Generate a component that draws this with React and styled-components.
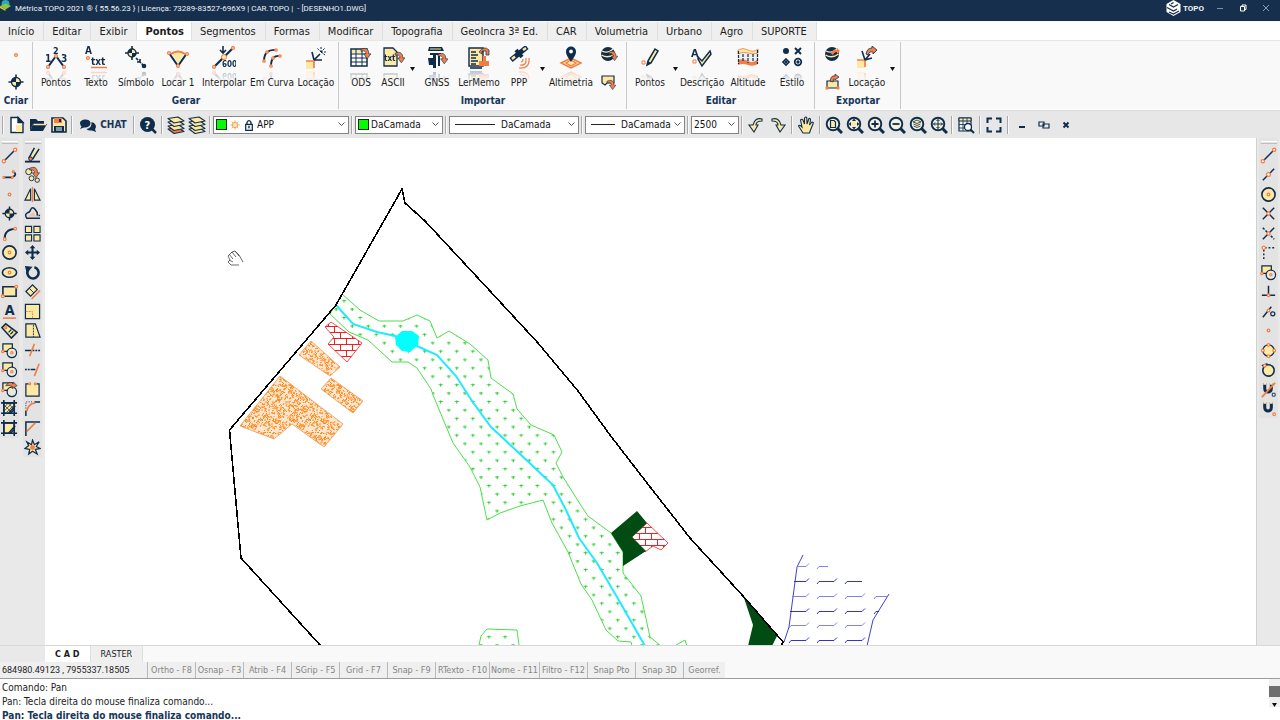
import React from 'react';
import styled, { createGlobalStyle } from 'styled-components';

const NAVY = '#0f2d4b';
const ORANGE = '#f27d45';
const CREAM = '#fde9a4';

const GlobalStyle = createGlobalStyle`
  * {
    box-sizing: border-box;
  }

  body {
    margin: 0;
    overflow: hidden;
    background: #f9f9f9;
    color: #1c1c1c;
    font-family: 'DejaVu Sans Condensed', 'Noto Sans', sans-serif;
    font-size: 10px;
  }

  button,
  input,
  select {
    margin: 0;
    padding: 0;
    border: 0;
    background: none;
    color: inherit;
    font: inherit;
  }

  svg {
    display: block;
    flex: none;
  }
`;

const Window = styled.div`
  display: flex;
  flex-direction: column;
  height: 100vh;
`;

const TitleBar = styled.header`
  display: flex;
  align-items: flex-start;
  height: 21px;
  padding-right: 3px;
  background: #162f4d;
  color: #eef2f6;
`;

const Title = styled.h1`
  flex: 1;
  margin: 0 0 0 3px;
  font-family: Roboto, sans-serif;
  font-size: 8px;
  font-weight: 400;
  line-height: 17px;
  white-space: pre;
`;

const Brand = styled.div`
  display: flex;
  align-items: center;
  gap: 2px;
  height: 16px;
  margin-right: 4px;
  font-family: Roboto, sans-serif;
  font-size: 8px;
  font-weight: 700;
`;

const CaptionButton = styled.button`
  display: flex;
  align-items: center;
  justify-content: center;
  width: 23px;
  height: 16px;
`;

const TabBar = styled.nav`
  display: flex;
  height: 19px;
  margin-top: 1px;
  background: #fff;
  border-bottom: 1px solid #e6e6e6;
`;

const Tab = styled.button`
  padding: 0 ${(p) => (p.$active ? 7 : 9)}px 0 8px;
  border-right: 1px solid #dedede;
  background: ${(p) => (p.$active ? '#fff' : '#efefef')};
  font-size: 11px;
  font-weight: ${(p) => (p.$active ? 700 : 400)};
  line-height: 17px;
  white-space: nowrap;
`;

const Ribbon = styled.div`
  display: flex;
  height: 69px;
  padding-top: 1px;
  border-bottom: 1px solid #fff;
`;

const Group = styled.section`
  display: flex;
  flex-direction: column;
  margin-right: 1px;
  padding: 4px ${(p) => p.$pad || 2}px 0;
  border-right: 1px solid #c9c9c9;
`;

const GroupBody = styled.div`
  display: flex;
  height: 45px;
`;

const GroupTitle = styled.h2`
  margin: 3px 0 0;
  color: #17365a;
  font-size: 10px;
  font-weight: 700;
  line-height: 14px;
  text-align: center;
`;

const RibbonButton = styled.button`
  display: flex;
  flex-direction: column;
  align-items: center;
  gap: 6px;
  width: ${(p) => p.$width}px;
  line-height: 14px;
  white-space: nowrap;
`;

const Mirrored = styled.span`
  -webkit-box-reflect: below 0 linear-gradient(transparent 50%, rgba(0, 0, 0, 0.35));
`;

const DropArrow = styled.button`
  width: 10px;
  display: flex;
  align-items: center;
  justify-content: center;
`;

const Stack = styled.div`
  display: flex;
  flex-direction: column;
  align-items: center;
  justify-content: space-between;
  width: 28px;
`;

const ToolBar = styled.div`
  display: flex;
  align-items: center;
  height: 28px;
  border-top: 1px solid #dcdcdc;
  background: #e7e7e7;
`;

const Divider = styled.span`
  width: 2px;
  height: 18px;
  margin: 0 2px;
  border-left: 1px solid #a9a9a9;
  border-right: 1px solid #fafafa;
`;

const ToolButton = styled.button`
  display: flex;
  align-items: center;
  justify-content: center;
  gap: 3px;
  width: ${(p) => p.$width || 21}px;
  height: 22px;
  color: #17365a;
  font-weight: 700;
`;

const Combo = styled.label`
  display: flex;
  align-items: center;
  gap: 2px;
  width: ${(p) => p.$width}px;
  height: 18px;
  padding: 0 3px 0 2px;
  border: 1px solid #858585;
  background: #fff;
`;

const Select = styled.select`
  flex: 1;
  min-width: 0;
  appearance: none;
  color: #111;
  outline: none;
`;

const Swatch = styled.span`
  width: 11px;
  height: 11px;
  border: 1px solid #222;
  background: #0f0;
`;

const LineSample = styled.span`
  width: ${(p) => p.$width}px;
  height: 1px;
  margin: 0 4px 0 3px;
  background: #222;
`;

const Main = styled.main`
  display: flex;
  flex: 1;
  min-height: 0;
  background: #e9e9e9;
`;

const SideBar = styled.aside`
  display: flex;
  align-items: flex-start;
  gap: 4px;
  padding: ${(p) => (p.$right ? '0 2px' : '0 3px 0 0')};
  border-left: ${(p) => (p.$right ? '1px solid #d0d0d0' : 0)};
`;

const PaletteColumn = styled.div`
  display: flex;
  flex-direction: column;
  width: 19px;
  background: #e3e3e3;
`;

const PaletteGrip = styled.span`
  width: 16px;
  height: 3px;
  margin: 3px auto 1px;
  border-top: 1px solid #fff;
  border-bottom: 1px solid #bdbdbd;
`;

const PaletteGrid = styled.div`
  display: grid;
  grid-auto-rows: 20px 19px;
`;

const PaletteButton = styled.button`
  display: flex;
  align-items: center;
  justify-content: center;
`;

const Canvas = styled.div`
  flex: 1;
  min-width: 0;
  overflow: hidden;
  background: #fff;
`;

const SheetBar = styled.div`
  display: flex;
  height: 17px;
  padding-left: 45px;
  border-top: 1px solid #d8d8d8;
  background: linear-gradient(to right, #e9e9e9 45px, #f9f9f9 45px);
`;

const SheetTab = styled.button`
  padding: 0 10px;
  border-right: 1px solid #dedede;
  background: ${(p) => (p.$active ? '#fff' : '#efefef')};
  font-size: 9px;
  font-weight: ${(p) => (p.$active ? 700 : 400)};
`;

const StatusBar = styled.footer`
  display: flex;
  height: 17px;
  border-bottom: 1px solid #9c9c9c;
  font-size: 9px;
  white-space: nowrap;
`;

const Coordinates = styled.output`
  width: 147px;
  padding-left: 2px;
  background: #efefef;
  font-family: Roboto, sans-serif;
  line-height: 16px;
`;

const StatusCell = styled.button`
  width: ${(p) => p.$width}px;
  border-left: 1px solid #b9b9b9;
  background: #efefef;
  color: #858585;
`;

const CommandPane = styled.section`
  display: flex;
  height: 41px;
  background: #fff;
`;

const CommandLog = styled.div`
  flex: 1;
  padding: 2px 0 0 2px;
  line-height: 14px;
`;

const CommandLine = styled.p`
  margin: 0;
`;

const CommandInput = styled.input`
  display: block;
  width: 100%;
  height: 14px;
  color: #17365a;
  font-weight: 700;
  outline: none;
`;

const ScrollTrack = styled.div`
  display: flex;
  flex-direction: column;
  align-items: center;
  justify-content: space-between;
  width: 11px;
  height: 28px;
  background: #f1f1f1;
`;

const ScrollThumb = styled.span`
  width: 11px;
  height: 11px;
  background: #6f6f6f;
`;

const Dot = ({ x, y, r = 1.4 }) => (
  <circle cx={x} cy={y} r={r} fill="#fff" stroke={ORANGE} strokeWidth="1.3" />
);

const Curl = ({ x = 0, y = 0, s = 1 }) => (
  <path
    transform={`translate(${x} ${y}) scale(${s})`}
    d="M0 1.5C5-1 9 1 8.500 6.500H11L7 12 3 6.500H5.500C5.500 4 3.500 2.500 0 3.500z"
    fill={ORANGE}
    stroke={NAVY}
    strokeWidth=".7"
  />
);

const Target = ({ x, y, r }) => (
  <g stroke={NAVY}>
    <path d={`M${x - r - 3} ${y}H${x + r + 3}M${x} ${y - r - 3}V${y + r + 3}`} strokeWidth="1.6" />
    <circle cx={x} cy={y} r={r} fill={CREAM} strokeWidth="1.4" />
    <path
      d={`M${x} ${y}V${y - r}A${r} ${r} 0 0 0 ${x - r} ${y}zM${x} ${y}V${y + r}A${r} ${r} 0 0 0 ${x + r} ${y}z`}
      fill={NAVY}
      stroke="none"
    />
  </g>
);

const Globe = () => (
  <g>
    <circle cx="8" cy="8" r="7" fill={NAVY} />
    <path d="M2 5Q8 8 13 3M1.500 9Q8 13 14.500 8" fill="none" stroke={CREAM} strokeWidth="1.300" />
  </g>
);

const Lens = ({ children }) => (
  <g fill="none" stroke={NAVY}>
    <path d="M12.500 12.500L17 17" strokeWidth="3" />
    <circle cx="8" cy="8" r="6.300" fill="#f4f1de" strokeWidth="1.900" />
    {children}
  </g>
);

const Sheets = ({ color }) => (
  <g fill={CREAM} stroke={NAVY} strokeWidth="1.100" strokeLinejoin="round">
    <path d="M1 13L11 11.500 17 15.500 7 17.500z" fill={color} />
    <path d="M1 10L11 8.500 17 12.500 7 14.500z" />
    <path d="M1 6L11 4.500 17 8.500 7 10.500z" />
    <path d="M1 2.500L11 1 17 5 7 7z" />
  </g>
);

const Shapes = () => (
  <g stroke={NAVY} strokeWidth="1.300">
    <path d="M2 2H12V10H2z" fill={CREAM} />
    <circle cx="11.500" cy="11.500" r="5" fill="#e6e9e4" />
    <path d="M8 9.500Q11 6 12 8L11 11z" fill={CREAM} stroke="none" />
  </g>
);

const Crop = ({ hatch }) => (
  <g fill="none" stroke={NAVY} strokeWidth="1.700">
    <path d="M3 3H14V10L10 14H3z" fill={CREAM} />
    {hatch && <path d="M3 8L8 3M3 12L12 3M6 13L13 6M3 5L11 13M7 3L13 9" strokeWidth=".8" />}
    <path d="M3 0V17M14 0V17M0 3H17M0 14H17M8 14L15 6" />
  </g>
);

const stroke = { fill: 'none', stroke: NAVY, strokeWidth: 1.6 };

// ribbon, drawn on 24x24
const ribbonIcons = {
  points: (
    <g>
      <path d="M4 21L12 10L20 21" {...stroke} strokeWidth="2" />
      <text x="9" y="8" fontSize="9" fontWeight="700" fill={NAVY}>2</text>
      <text x="1" y="16" fontSize="10" fontWeight="700" fill={NAVY}>1</text>
      <text x="17" y="16" fontSize="10" fontWeight="700" fill={NAVY}>3</text>
      <Dot x={4} y={21} /><Dot x={12} y={10} /><Dot x={20} y={21} />
    </g>
  ),
  text: (
    <g>
      <text x="1" y="8" fontSize="10" fontWeight="700" fill={NAVY}>A</text>
      <Dot x={4} y={12} />
      <text x="7" y="19" fontSize="10" fontWeight="700" fill={NAVY}>txt</text>
      <path d="M7 21.500H23" stroke={ORANGE} strokeWidth="1.500" />
    </g>
  ),
  symbol: (
    <g>
      <Target x={8} y={7} r={4} />
      <path d="M12 12L19 19M16 16V12M16 16H12" {...stroke} strokeDasharray="3 1" />
      <circle cx="20" cy="20" r="2.300" fill={NAVY} />
    </g>
  ),
  locate: (
    <g>
      <path d="M6 8Q12 3 18 8L12 18z" fill={CREAM} />
      <path d="M5 8Q12 3 19 8" fill="none" stroke={ORANGE} strokeWidth="2" />
      <path d="M3 7L12 20L21 7" {...stroke} strokeWidth="2" />
      <Dot x={3} y={7} /><Dot x={21} y={8} /><Dot x={12} y={20} />
    </g>
  ),
  interpolate: (
    <g>
      <path d="M2 21L21 2" {...stroke} strokeWidth="2.200" />
      <path d="M11 0V6M8 4L11 7L14 4" {...stroke} />
      <circle cx="12" cy="11" r="2.500" fill={CREAM} stroke={ORANGE} />
      <Dot x={2} y={21} /><Dot x={21} y={2} />
      <text x="10" y="21" fontSize="8" fontWeight="700" fill={NAVY}>600</text>
    </g>
  ),
  curve: (
    <g fill="none" stroke={NAVY} strokeWidth="1.900">
      <path d="M4 15Q4 3 16 4M11 20Q11 9 20 10" />
      <Dot x={4} y={15} r={1.2} /><Dot x={7} y={6} r={1.2} /><Dot x={16} y={4} r={1.2} />
      <Dot x={11} y={20} r={1.2} /><Dot x={13} y={12} r={1.2} /><Dot x={20} y={10} r={1.2} />
    </g>
  ),
  stake: (
    <g>
      <path d="M2 15H10V23H2z" fill={CREAM} />
      <path d="M2 15H10V22" fill="none" stroke={ORANGE} strokeWidth="1.700" />
      <path d="M10 14L8 6M10 14L16 8M10 14H18" {...stroke} />
      <path d="M17 6L13 2M17 6V1M17 6L21 2M17 6H22M17 6L21 9" {...stroke} strokeWidth="1" strokeDasharray="2 1" />
    </g>
  ),
  ods: (
    <g>
      <path d="M2 3H18V20H2z" fill="#fff" stroke={NAVY} strokeWidth="1.500" />
      <path d="M3 4H14V7H3z" fill={CREAM} />
      <path d="M2 8H18M2 12H18M2 16H18M7 3V20M13 3V20" {...stroke} strokeWidth="1" />
      <Curl x={12} y={2} s={0.9} />
    </g>
  ),
  ascii: (
    <g>
      <path d="M3 2H12L16 6V20H3z" fill={CREAM} stroke={NAVY} strokeWidth="1.300" />
      <text x="3" y="15" fontSize="8" fontWeight="700" fill={NAVY}>txt</text>
      <Curl x={14} y={6} s={0.9} />
    </g>
  ),
  gnss: (
    <g fill={NAVY}>
      <path d="M4 1H17L19 5H3z" />
      <path d="M5 7H16V9H5zM8 9V22H11V9zM3 12H8V19H4zM13 10V20H15V10z" />
      <path d="M5 3H16" stroke={CREAM} />
      <Curl x={13} y={7} s={0.9} />
    </g>
  ),
  memo: (
    <g>
      <path d="M2 2H16V20H2z" fill={CREAM} stroke={NAVY} strokeWidth="1.400" />
      <path d="M4 6H9M4 9H11M4 12H9M4 15H11M4 18H9" {...stroke} />
      <path d="M12 6Q17-1 22 4V9H19V5H15V8z" fill={ORANGE} stroke={NAVY} strokeWidth=".7" />
      <path d="M16 10H19V15H22V20H12V15H16z" fill={ORANGE} />
      <path d="M3 22H15" {...stroke} />
    </g>
  ),
  satellite: (
    <g>
      <path d="M4 14L20 1" stroke={NAVY} strokeWidth="5" />
      <path d="M5 13L8 10.500M16 4L19 2" stroke={CREAM} strokeWidth="2.500" />
      <path d="M9 4L15 11" stroke={NAVY} strokeWidth="4" />
      <path d="M14 16Q16 16 16 13M13 19Q20 20 19 12M12 22Q23 23 22 12" fill="none" stroke={ORANGE} strokeWidth="1.200" />
    </g>
  ),
  altimetry: (
    <g>
      <path d="M2 17L12 12L22 17L12 22z" fill={CREAM} stroke={ORANGE} strokeWidth="1.500" />
      <path d="M7 17L12 14L17 17L12 20z" fill="none" stroke={ORANGE} strokeWidth="1.300" />
      <path d="M12 16C9 11 7 9 7 5.500A5 5 0 0 1 17 5.500C17 9 15 11 12 16z" fill={NAVY} />
      <circle cx="12" cy="5.500" r="1.900" fill="#fff" />
    </g>
  ),
  pencil: (
    <g>
      <path d="M10 15L17 3L20 5L13 17L9 19z" fill={CREAM} stroke={NAVY} strokeWidth="1.500" />
      <path d="M9 19L13 17L10 15z" fill={NAVY} />
      <path d="M4 15H7V18H4z" fill="#fff" stroke={ORANGE} />
    </g>
  ),
  check: (
    <g>
      <text x="1" y="11" fontSize="11" fontWeight="700" fill={NAVY}>A</text>
      <path d="M3 14H6V17H3z" fill="#fff" stroke={ORANGE} />
      <path d="M8 11L12 15L20 5L21 8L12 20L8 13z" fill={CREAM} stroke={NAVY} strokeWidth="1.500" />
    </g>
  ),
  altitude: (
    <g>
      <path d="M3 7H21V16H3z" fill="#eaf0f3" />
      <path d="M2 14Q7 12 12 15T22 13V18Q17 21 12 19T2 19z" fill={ORANGE} />
      <path d="M2 4Q7 1 12 4T22 3V7Q17 9 12 7T2 8z" fill={CREAM} stroke={ORANGE} strokeWidth=".8" />
      <path d="M2.500 5V18M7 8V16M12 8V17M17 8V16M21.500 4V18" {...stroke} strokeWidth="1.200" strokeDasharray="3 1" />
    </g>
  ),
  style: (
    <g fill="none" stroke={NAVY} strokeWidth="1.700">
      <circle cx="6" cy="5" r="3" fill={NAVY} stroke="none" />
      <path d="M15 2L21 8M21 2L15 8" strokeWidth="2" />
      <path d="M6 13L9 16L6 19L3 16z" />
      <circle cx="18" cy="16" r="3.300" />
      <circle cx="18" cy="16" r=".8" />
      <circle cx="6" cy="16" r=".6" />
    </g>
  ),
  stakeOut: (
    <g>
      <path d="M2 14H10V22H2z" fill={CREAM} />
      <path d="M2 14H10V21" fill="none" stroke={ORANGE} strokeWidth="1.700" />
      <path d="M10 14L7 5M10 14L15 8M10 14L17 12" {...stroke} />
      <path d="M11 8Q12 2 17 2V0L22 4L18 8V6Q14 5 13 9z" fill={ORANGE} stroke={NAVY} strokeWidth=".8" />
    </g>
  ),
};

// toolbars, drawn on 18x18
const barIcons = {
  point: <Dot x={9} y={9} />,
  target: <Target x={9} y={9} r={4.5} />,
  earthIn: (
    <g><Globe /><Curl x={9} y={5} s={0.8} /></g>
  ),
  earthOut: (
    <g><Globe /><path d="M7 8Q9 2 13 4V2L16 5L13 8V6Q10 6 9 9z" fill={ORANGE} /></g>
  ),
  tagIn: (
    <g>
      <path d="M2 3H14V10H7L5 12L2 10z" fill={CREAM} stroke={NAVY} strokeWidth="1.200" />
      <Curl x={7} y={7} s={0.8} />
    </g>
  ),
  boxOut: (
    <g>
      <path d="M3 8H14V15H3z" fill={CREAM} stroke={NAVY} strokeWidth="1.200" />
      <path d="M6 8Q7 2 11 3V1L15 4L11 7V6Q9 5 9 9z" fill={ORANGE} stroke={NAVY} strokeWidth=".7" />
      <Dot x={3} y={15} r={1} /><Dot x={14} y={15} r={1} />
    </g>
  ),
  file: (
    <g stroke={NAVY} strokeWidth="1.400" fill="#fff">
      <path d="M3 1.500H10L15 6.500V16.500H3z" />
      <path d="M8 9H14V16H8z" fill={CREAM} stroke="none" />
      <path d="M10 1.500V6.500H15z" fill={NAVY} />
    </g>
  ),
  folder: (
    <g>
      <path d="M1 3H7L9 5H15V8H4L1 15z" fill={NAVY} />
      <path d="M4 8H18L14 15H1z" fill={NAVY} />
      <path d="M4.500 8.500H17" stroke={CREAM} strokeWidth="1.500" />
    </g>
  ),
  save: (
    <g>
      <path d="M2 2H13L16 5V16H2z" fill={CREAM} stroke={NAVY} strokeWidth="1.600" />
      <path d="M4 2H12V7H4z" fill={ORANGE} /><path d="M9 3H11V6H9zM4 10H14V16H4z" fill={NAVY} />
      <path d="M6 12H12M6 14H12" stroke="#fff" />
    </g>
  ),
  chat: (
    <g fill={NAVY}>
      <path d="M1 7C1 3 11 2 11.500 7C11.500 11 7 12 5 11.500L1 13L2.500 10.500Q1 9 1 7z" />
      <path d="M12.500 6C17 7 18 11 16 13L17 16L13 14.500Q9 15 7.500 13Q13 12 12.500 6z" />
    </g>
  ),
  help: (
    <g>
      <path d="M12 12L17 17" stroke={NAVY} strokeWidth="2.500" />
      <circle cx="8.500" cy="8.500" r="7.500" fill={NAVY} />
      <text x="5.500" y="12.500" fontSize="11" fontWeight="700" fill="#fff">?</text>
    </g>
  ),
  layerEdit: <Sheets color={ORANGE} />,
  layers: <Sheets color={CREAM} />,
  undo: <path d="M15 3Q8 1 6 9H2L7 16L11 9H9Q9 5 15 5z" fill={CREAM} stroke={NAVY} strokeWidth="1.100" />,
  redo: <path d="M3 3Q10 1 12 9H16L11 16L7 9H9Q9 5 3 5z" fill={CREAM} stroke={NAVY} strokeWidth="1.100" />,
  hand: (
    <path
      d="M6 17L1.500 10Q2 8.500 4 10L5 11L3.500 4Q5 2.500 6 4L7.500 8L7.500 2Q9 0 9.800 2L10 8L12 2.500Q13.500 2 13.500 4L12.500 9L15 6Q17 6 16 8L13.500 14L12.500 17z"
      fill={CREAM}
      stroke={NAVY}
      strokeWidth="1.100"
    />
  ),
  zoomWindow: <Lens><path d="M5.500 4.500H9L10.500 6V11.500H5.500z" fill={CREAM} strokeWidth="1.200" /></Lens>,
  zoomExtents: (
    <Lens>
      <circle cx="8" cy="8" r="2.500" fill={CREAM} stroke="none" />
      <path d="M6 5H10L8 2.500zM6 11H10L8 13.500zM5 6V10L2.500 8zM11 6V10L13.500 8z" fill={NAVY} stroke="none" />
    </Lens>
  ),
  zoomIn: <Lens><path d="M4.500 8H11.500M8 4.500V11.500" strokeWidth="1.800" /></Lens>,
  zoomOut: <Lens><path d="M4.500 8H11.500" strokeWidth="1.800" /></Lens>,
  zoomLayer: <Lens><path d="M4 6L8 4L12 6L8 7.500zM4.500 8L8 9.500L11.500 8M4.500 10L8 11.500L11.500 10" fill={CREAM} strokeWidth=".8" /></Lens>,
  zoomPan: <Lens><path d="M3.500 8H12.500M8 3.500V12.500M6.500 5L8 3.500L9.500 5M6.500 11L8 12.500L9.500 11M5 6.500L3.500 8L5 9.500M11 6.500L12.500 8L11 9.500" strokeWidth="1" /></Lens>,
  tableSearch: (
    <g>
      <path d="M2 2H14V15H2z" fill="#e9f0f4" stroke={NAVY} strokeWidth="1.200" />
      <path d="M2 2H14V5H2z" fill={CREAM} stroke={NAVY} /><path d="M2 8.500H14M2 12H14M6 2V15M10 2V15" {...stroke} strokeWidth=".8" />
      <circle cx="11" cy="11" r="3.500" fill="#fff" stroke={NAVY} strokeWidth="1.300" /><path d="M13.500 13.500L17 17" stroke={NAVY} strokeWidth="2" />
    </g>
  ),
  fullscreen: <path d="M7 2.500H2.500V7M11 2.500H15.500V7M7 15.500H2.500V11M11 15.500H15.500V11" {...stroke} strokeWidth="2" />,
  minimize: <path d="M6 11H12" {...stroke} strokeWidth="2" />,
  restore: <path d="M4 6H9V10H4zM8 8H14V12H8z" fill="#e9edf0" stroke={NAVY} strokeWidth="1.200" />,
  close: <path d="M6.500 6.500L11.500 11.500M11.500 6.500L6.500 11.500" {...stroke} strokeWidth="2" />,
  sun: (
    <g stroke={ORANGE}>
      <path d="M9 2V16M2 9H16M4 4L14 14M14 4L4 14" />
      <circle cx="9" cy="9" r="4" fill={CREAM} />
    </g>
  ),
  lock: (
    <g>
      <path d="M6 8V5Q9 0 12 5V8" {...stroke} strokeWidth="2" />
      <path d="M4 8H14V17H4z" fill="#e9eef0" stroke={NAVY} strokeWidth="1.800" /><path d="M9 10V14" {...stroke} strokeWidth="2" />
    </g>
  ),
  line: <g><path d="M3 15L15 3" {...stroke} /><Dot x={3} y={15} r={1.7} /><Dot x={15} y={3} r={1.7} /></g>,
  polyline: <g><path d="M3 12H12Q18 9 13 6" {...stroke} strokeWidth="1.800" /><Dot x={3} y={12} r={1} /><Dot x={12} y={12} r={1} /><Dot x={13} y={6} r={1} /></g>,
  arc: <g><path d="M4 15Q3 5 15 4" {...stroke} strokeWidth="2" /><Dot x={4} y={15} /><Dot x={15} y={4} /></g>,
  circle: <g><circle cx="9" cy="9" r="7" fill={CREAM} stroke={NAVY} strokeWidth="1.700" /><Dot x={9} y={9} /></g>,
  ellipse: <g><ellipse cx="9" cy="9" rx="7.500" ry="5" fill={CREAM} stroke={NAVY} strokeWidth="1.700" /><Dot x={9} y={9} /></g>,
  rectangle: <g><path d="M2 4H16V14H2z" fill={CREAM} stroke={NAVY} strokeWidth="1.700" /><Dot x={2} y={14} /><Dot x={16} y={4} /></g>,
  letter: <g><text x="4" y="13" fontSize="15" fontWeight="700" fill={NAVY}>A</text><path d="M2 16H16" stroke={ORANGE} strokeWidth="1.600" /></g>,
  tag: (
    <g>
      <path d="M1 6L5 2L17 11L11 17z" fill={CREAM} stroke={NAVY} strokeWidth="1.700" />
      <path d="M8 11L11 8M10 13L13 10" {...stroke} strokeWidth="1.300" /><Dot x={5} y={6} r={1} />
    </g>
  ),
  shapes: <g><Shapes /><Dot x={2} y={10} r={1.2} /><Dot x={11.5} y={11.5} r={1.2} /></g>,
  shapesOut: <g><Shapes /><path d="M5 5Q9-1 13 3V1L17 5L12 8V6Q9 4 5 5z" fill={ORANGE} stroke={NAVY} strokeWidth=".7" /><Dot x={2} y={10} r={1.2} /></g>,
  hatch: <Crop hatch />,
  region: <Crop />,
  erase: <g><path d="M7 10L11 2L15 3L10 12z" fill={CREAM} /><path d="M5 12L11 1M9 13L16 2" {...stroke} /><circle cx="7" cy="12.500" r="2" fill={ORANGE} stroke={NAVY} /><path d="M1 15.500H17" {...stroke} strokeWidth="2" /></g>,
  copy: <g><circle cx="5" cy="6" r="3.200" fill={CREAM} stroke={NAVY} /><Curl x={6} y={1} s={0.95} /><circle cx="8" cy="13" r="2.600" fill={CREAM} stroke={NAVY} /><circle cx="14" cy="15" r="2.300" fill={CREAM} stroke={NAVY} /></g>,
  mirror: <g fill={CREAM} stroke={NAVY} strokeWidth="1.200"><path d="M7 3V15H1z" /><path d="M11 3V15H17z" /><path d="M9 1V17" stroke={ORANGE} strokeWidth="1.500" /></g>,
  offset: <g><path d="M17 11H14V8L12 5Q9 1 7 5Q6 8 4 8Q0 10 3 14H17" {...stroke} /><path d="M16 12.500H5Q5 10 8 9L10 7L12 11H16z" fill="#e8c6ad" /></g>,
  array: <g fill={CREAM} stroke={NAVY} strokeWidth="1.200"><path d="M1.500 1.500H8V8H1.500zM10.500 1.500H17V8H10.500zM1.500 10.500H8V17H1.500zM10.500 10.500H17V17H10.500z" /></g>,
  move: <g><path d="M9 3V15M3 9H15" {...stroke} strokeWidth="2.200" /><path d="M9 1L12 4.500H6zM9 17L12 13.500H6zM1 9L4.500 6V12zM17 9L13.500 6V12z" fill={NAVY} /></g>,
  rotate: <g><path d="M4 7A6 6 0 1 0 11 3.500" {...stroke} strokeWidth="2.700" /><path d="M1 2L9 3L3 10z" fill={NAVY} /></g>,
  align: <g><path d="M2 9L9 2L14 7L7 14z" fill={CREAM} stroke={NAVY} strokeWidth="1.300" /><path d="M5.500 5.500L10.500 10.500" stroke={NAVY} /><path d="M8 17L17 8" stroke={ORANGE} strokeWidth="1.700" /></g>,
  scale: <g><path d="M1.500 1.500H16.500V16.500H1.500z" fill={CREAM} stroke={NAVY} strokeWidth="1.300" /><path d="M2 9H9V16" fill="none" stroke={ORANGE} strokeDasharray="2 1" /></g>,
  stretch: <g><path d="M2 2H12L17 16H2z" fill={CREAM} stroke={NAVY} strokeWidth="1.300" /><path d="M10 3V16" stroke={NAVY} strokeDasharray="2 1" /></g>,
  trim: <g><path d="M1 9H8" {...stroke} /><path d="M9 9H17" {...stroke} strokeDasharray="2 1" /><path d="M6 15L11 2" stroke={ORANGE} strokeWidth="1.700" /></g>,
  extend: <g><path d="M1 9H7" {...stroke} strokeDasharray="2 1" /><path d="M7 9H12" {...stroke} /><path d="M11 16L16 3" stroke={ORANGE} strokeWidth="1.700" /></g>,
  breakAt: <g><path d="M5 3H2V16H16V3H13" fill={CREAM} stroke={NAVY} strokeWidth="1.300" /><Dot x={6} y={3} r={1} /><Dot x={12} y={3} r={1} /></g>,
  fillet: <g><path d="M2 11V17M11 2H17" {...stroke} /><path d="M2 9V2H10" {...stroke} strokeWidth="1" strokeDasharray="1 1.500" /><path d="M3 12Q4 4 12 3" fill="none" stroke={ORANGE} strokeWidth="1.700" /></g>,
  chamfer: <g><path d="M2 17V2H17" {...stroke} /><path d="M3 12L12 3" stroke={ORANGE} strokeWidth="1.700" /></g>,
  explode: <g><path d="M9 1L11 6L16 3L13 8L17 10L12 11L14 16L9 13L5 16L6 11L1 10L5 7L3 3L8 6z" fill={CREAM} stroke={NAVY} strokeWidth="1.300" /><circle cx="9" cy="9" r="2.500" fill={ORANGE} /></g>,
  midpoint: <g><path d="M3 15L15 3" {...stroke} /><Dot x={9} y={9} r={2} /></g>,
  intersection: <g><path d="M3 3L15 15M15 3L3 15" {...stroke} /><Dot x={9} y={9} r={1.7} /></g>,
  apparent: <g><path d="M3 15L15 3" {...stroke} /><path d="M3 3L15 15" {...stroke} strokeDasharray="2.500 1.500" /><Dot x={9} y={9} r={1.7} /></g>,
  extension: <g><path d="M5 4H17M4 6V17" {...stroke} strokeDasharray="2 2" /><Dot x={4} y={4} r={1.7} /></g>,
  perpendicular: <g><path d="M9 3V13M2 13H16" {...stroke} /><Dot x={9} y={13} /></g>,
  tangent: <g><path d="M3 15L12 4" {...stroke} /><Dot x={9} y={8} /><circle cx="13.500" cy="11.500" r="2.200" {...stroke} strokeWidth="1.300" /></g>,
  quadrant: <g><circle cx="9" cy="9" r="6" fill={CREAM} stroke={NAVY} strokeWidth="1.300" /><Dot x={9} y={3} /><Dot x={15} y={9} /><Dot x={9} y={15} /><Dot x={3} y={9} /></g>,
  nearest: <g><circle cx="9" cy="10" r="6" fill={CREAM} stroke={NAVY} strokeWidth="1.700" /><path d="M2 5L8 3" {...stroke} /><Dot x={5} y={5} /></g>,
  magnetOff: <g><path d="M5 2V8C5 13 12 13 12 8V2" {...stroke} strokeWidth="3.200" /><path d="M3.500 3H6.500M10.500 3H13.500" stroke={CREAM} strokeWidth="2" /><path d="M2 17L16 2" stroke={ORANGE} strokeWidth="2" /><path d="M13 13H16V16H13z" fill="#fff" stroke={NAVY} /></g>,
  magnet: <g><path d="M5 2V8C5 13 12 13 12 8V2" {...stroke} strokeWidth="3.200" /><path d="M3.500 3H6.500M10.500 3H13.500" stroke={CREAM} strokeWidth="2" /><Dot x={15} y={15} /></g>,
};

const RibbonIcon = ({ name }) => (
  <svg width="24" height="24" viewBox="0 0 24 24" aria-hidden="true">{ribbonIcons[name]}</svg>
);

const BarIcon = ({ name, size = 18 }) => (
  <svg width={size} height={size} viewBox="0 0 18 18" aria-hidden="true">{barIcons[name]}</svg>
);

const TriangleDown = () => (
  <svg width="5" height="4" viewBox="0 0 5 4" aria-hidden="true"><path d="M0 0H5L2.500 4z" fill="#111" /></svg>
);

const Chevron = () => (
  <svg width="7" height="5" viewBox="0 0 7 5" aria-hidden="true"><path d="M.5 .5L3.500 3.500L6.500 .5" fill="none" stroke="#555" /></svg>
);

const tabs = [
  'Início', 'Editar', 'Exibir', 'Pontos', 'Segmentos', 'Formas', 'Modificar', 'Topografia',
  'GeoIncra 3ª Ed.', 'CAR', 'Volumetria', 'Urbano', 'Agro', 'SUPORTE',
];

// item kinds: [icon, label, width] is a button, 'arrow' a drop-down, { stack } two small icons
const groups = [
  { title: 'Criar', items: [{ stack: ['point', 'target'] }] },
  {
    title: 'Gerar',
    items: [
      ['points', 'Pontos', 40], ['text', 'Texto', 40], ['symbol', 'Símbolo', 40], ['locate', 'Locar 1', 44],
      ['interpolate', 'Interpolar', 48], ['curve', 'Em Curva', 48], ['stake', 'Locação', 40],
    ],
  },
  {
    title: 'Importar',
    items: [
      ['ods', 'ODS', 36], ['ascii', 'ASCII', 28], 'arrow', ['gnss', 'GNSS', 40], ['memo', 'LerMemo', 44],
      ['satellite', 'PPP', 36], 'arrow', ['altimetry', 'Altimetria', 48], { stack: ['earthIn', 'tagIn'] },
    ],
    pad: 3,
  },
  {
    title: 'Editar',
    items: [['pencil', 'Pontos', 40], 'arrow', ['check', 'Descrição', 44], ['altitude', 'Altitude', 48], ['style', 'Estilo', 40]],
  },
  {
    title: 'Exportar',
    items: [{ stack: ['earthOut', 'boxOut'] }, ['stakeOut', 'Locação', 40], 'arrow'],
    pad: 3,
  },
];

const RibbonItem = ({ item }) => {
  if (item === 'arrow') {
    return <DropArrow aria-label="Mais opções"><TriangleDown /></DropArrow>;
  }
  if (item.stack) {
    return (
      <Stack>
        {item.stack.map((name) => (
          <button key={name} aria-label={name}><BarIcon name={name} /></button>
        ))}
      </Stack>
    );
  }
  const [icon, label, width] = item;
  return (
    <RibbonButton $width={width}>
      <Mirrored><RibbonIcon name={icon} /></Mirrored>
      {label}
    </RibbonButton>
  );
};

const ComboBox = ({ label, value, width, children }) => (
  <Combo $width={width}>
    {children}
    <Select aria-label={label}>
      <option>{value}</option>
    </Select>
    <Chevron />
  </Combo>
);

const ToolButtons = ({ names, width }) =>
  names.map((name) => (
    <ToolButton key={name} $width={width} aria-label={name}>
      <BarIcon name={name} />
    </ToolButton>
  ));

const drawTools = [
  'line', 'polyline', 'point', 'target', 'arc', 'circle', 'ellipse', 'rectangle', 'letter', 'tag',
  'shapes', 'shapes', 'shapesOut', 'hatch', 'region',
];
const editTools = [
  'erase', 'copy', 'mirror', 'offset', 'array', 'move', 'rotate', 'align', 'scale', 'stretch',
  'trim', 'extend', 'breakAt', 'fillet', 'chamfer', 'explode',
];
const snapTools = [
  'line', 'midpoint', 'circle', 'intersection', 'apparent', 'extension', 'shapes', 'perpendicular',
  'tangent', 'point', 'quadrant', 'nearest', 'magnetOff', 'magnet',
];

const ToolPalette = ({ names }) => (
  <PaletteColumn>
    <PaletteGrip />
    <PaletteGrid>
      {names.map((name, i) => (
        <PaletteButton key={i} aria-label={name}><BarIcon name={name} size={17} /></PaletteButton>
      ))}
    </PaletteGrid>
  </PaletteColumn>
);

const statusCells = [
  ['Ortho - F8', 48], ['Osnap - F3', 48], ['Atrib - F4', 48], ['SGrip - F5', 48], ['Grid - F7', 48],
  ['Snap - F9', 48], ['RTexto - F10', 54], ['Nome - F11', 50], ['Filtro - F12', 48], ['Snap Pto', 48],
  ['Snap 3D', 48], ['Georref.', 42],
];

const BrickPattern = ({ id, x, y }) => (
  <pattern id={id} x={x} y={y} width="12" height="12" patternUnits="userSpaceOnUse">
    <path d="M0 .5H12M0 6.500H12M3.500 0V6M9.500 6V12" stroke="#ee2222" strokeWidth="1" />
  </pattern>
);

// short random strokes, from a fixed seed so that the soil hatch never changes
const speckles = (() => {
  let seed = 7;
  const next = (n) => {
    seed = (seed * 48271) % 2147483647;
    return Math.floor((seed / 2147483647) * n);
  };
  return Array.from({ length: 620 }, () => `M${next(48)} ${next(48)}l${next(5) - 2} ${next(5) - 2}`).join('');
})();

const RIPARIAN =
  '342,294 360,310 379,321 403,321 417,315 430,321 437,338 449,331 470,344 488,360 491,378 513,394 517,409 531,425 554,435 562,452 556,463 563,477 580,504 588,516 611,533 623,552 623,573 641,596 650,637 661,646 632,646 631,642 618,641 606,630 592,600 581,584 568,552 552,523 543,500 520,506 500,513 487,520 480,487 470,467 453,443 433,395 431,389 417,368 408,362 392,362 368,340 349,332 330,314';

// [y, colour, [x start, x end, has start hook, has end hook]...]
const marshRows = [
  [566.5, '#7474e6', [797, 806, 0, 1], [819, 828, 1, 0]],
  [581.5, '#1c1cc8', [794, 806, 0, 1], [819, 834, 1, 1], [847, 862, 1, 0]],
  [596.5, '#7474e6', [792, 806, 0, 1], [819, 834, 1, 1], [847, 862, 1, 1], [876, 888, 1, 0]],
  [611.5, '#1c1cc8', [790, 806, 0, 1], [819, 834, 1, 1], [847, 862, 1, 1], [876, 879, 1, 0]],
  [625.5, '#7474e6', [791, 806, 1, 1], [819, 834, 1, 1], [847, 862, 1, 1]],
  [640.5, '#1c1cc8', [791, 806, 1, 1], [819, 834, 1, 1], [847, 862, 1, 1]],
];

const Drawing = () => (
  <svg width="1211" height="507" viewBox="45 138 1211 507" fill="none" role="img" aria-label="Desenho">
    <defs>
      <pattern id="tufts" x="428.700" y="338.700" width="16.100" height="16.800" patternUnits="userSpaceOnUse">
        <path d="M2 4H6M10 12.400H14" stroke="#3ada3a" />
        <path d="M4 3V6M12 11.400V14.400" stroke="#22c022" />
      </pattern>
      <pattern id="soil" width="48" height="48" patternUnits="userSpaceOnUse">
        <path d="M0 0H48V48H0z" fill="#ffe6cc" />
        <path d={speckles} stroke="#ff8a1f" strokeWidth="1" />
      </pattern>
      <BrickPattern id="bricksA" x="325" y="332" />
      <BrickPattern id="bricksB" x="630" y="527" />
    </defs>

    <polygon points={RIPARIAN} fill="url(#tufts)" stroke="#4be04b" />
    <path d="M479 645L481 636L487 629L517 630L519 645" fill="url(#tufts)" stroke="#4be04b" />
    <path d="M676 645L685 640L687 646" stroke="#4be04b" />

    <g stroke="#ee2222" strokeWidth=".8">
      <polygon points="331,322 362,343 347,362 328,344 334,337 325,327" fill="url(#bricksA)" />
      <polygon points="647,523 668,543 661,550 653,546 645,552 632,537" fill="url(#bricksB)" />
    </g>
    <g fill="url(#soil)" stroke="#e59b58" strokeWidth=".8">
      <polygon points="311,341 340,367 330,376 299,355" />
      <polygon points="331,378 363,401 353,413 321,389" />
      <polygon points="280,376 343,424 324,447 292,424 274,439 240,426" />
    </g>
    <g fill="#004c12">
      <polygon points="637,511 647,523 632,537 646,551 623,566 623,552 611,533" />
      <polygon points="743,595 777,636 772,646 748,646 753,625" />
    </g>

    <path
      d="M336 305L353 324L377 332L395 336L417 346L437 355L456 376L472 401L491 427L520 454L553 485L566 510L579 538L597 563L617 597L645 646"
      stroke="#20eaff"
      strokeWidth="2"
    />
    <polygon points="395,337 402,331 412,331 419,336 418,345 410,352 402,351 396,345" fill="#00ffff" />

    <path
      d="M320 645L241 558L229.500 430L336 305L402 189L405 203L425 221L490 291L538 343L578 391L610 435L647 483L690 538L743 596L783 642L781 646"
      stroke="#000"
      strokeWidth="1.600"
      shapeRendering="crispEdges"
    />

    <g stroke="#2a2ad0" strokeWidth=".9">
      <path d="M803 555L797 567L789 627L784 642M889 594L873 620L867 646" />
      {marshRows.map(([y, color, ...runs]) =>
        runs.map(([from, to, start, end]) => (
          <path
            key={`${y}-${from}`}
            d={`${start ? `M${from - 2} ${y + 2.5}L` : 'M'}${from} ${y}H${to}${end ? 'l3 -3' : ''}`}
            stroke={color}
          />
        ))
      )}
    </g>

    <path
      d="M228 256l4-4 3-1 4 4 4 7M232 252l4 5M229 254l4 5M235 251l4 5M228 256l2 4-2 2 3 3h8M229 260l4 2"
      stroke="#444"
      strokeWidth=".8"
    />
  </svg>
);

const App = () => (
  <>
    <GlobalStyle />
    <Window>
      <TitleBar>
        <svg width="12" height="12" viewBox="0 0 12 12" aria-hidden="true">
          <circle cx="5.500" cy="4" r="4" fill="#2fa5b5" />
          <path d="M0 6L5.500 9.500L11 6L5.500 3.500z" fill="#8ac640" /><path d="M0 6L5.500 9.500V11L0 8z" fill="#d9c63c" />
        </svg>
        <Title>{'Métrica TOPO 2021 ® { 55.56.23 } | Licença: 73289-83527-696X9 | CAR.TOPO |  - [DESENHO1.DWG]'}</Title>
        <Brand>
          <svg width="15" height="16" viewBox="0 0 15 16" aria-hidden="true">
            <path d="M7.500 0L14.500 4V12L7.500 16L.5 12V4z" fill="#fff" />
            <path d="M3 4.500L7.500 7L12 4.500M1 7.500L7.500 11L11 9M3 12L7.500 14L13 11M7.500 2.500L5 4" fill="none" stroke="#162f4d" strokeWidth="1.300" />
          </svg>
          TOPO
        </Brand>
        <CaptionButton aria-label="Minimizar">
          <svg width="8" height="8" viewBox="0 0 8 8"><path d="M1 4.500H7" stroke="#7e90a3" /></svg>
        </CaptionButton>
        <CaptionButton aria-label="Restaurar">
          <svg width="8" height="8" viewBox="0 0 8 8"><path d="M1.500 2.500H5.500V7H1.500zM3 2V1H7V5.500H6" fill="none" stroke="#fff" /></svg>
        </CaptionButton>
        <CaptionButton aria-label="Fechar">
          <svg width="8" height="8" viewBox="0 0 8 8"><path d="M1 1L7 7M7 1L1 7" stroke="#8b9aac" /></svg>
        </CaptionButton>
      </TitleBar>

      <TabBar>
        {tabs.map((name) => (
          <Tab key={name} $active={name === 'Pontos'}>{name}</Tab>
        ))}
      </TabBar>

      <Ribbon>
        {groups.map((group) => (
          <Group key={group.title} $pad={group.pad}>
            <GroupBody>
              {group.items.map((item, i) => <RibbonItem key={i} item={item} />)}
            </GroupBody>
            <GroupTitle>{group.title}</GroupTitle>
          </Group>
        ))}
      </Ribbon>

      <ToolBar>
        <Divider />
        <ToolButtons names={['file', 'folder', 'save']} />
        <Divider />
        <ToolButton $width={56}><BarIcon name="chat" />CHAT</ToolButton>
        <Divider />
        <ToolButtons names={['help']} width={22} />
        <Divider />
        <ToolButtons names={['layerEdit', 'layers']} />
        <Divider />
        <ComboBox label="Camada" value="APP" width={136}>
          <Swatch /><BarIcon name="sun" size={12} /><BarIcon name="lock" size={12} />
        </ComboBox>
        <Divider />
        <ComboBox label="Cor" value="DaCamada" width={88}><Swatch /></ComboBox>
        <Divider />
        <ComboBox label="Tipo de linha" value="DaCamada" width={130}><LineSample $width={40} /></ComboBox>
        <Divider />
        <ComboBox label="Espessura" value="DaCamada" width={100}><LineSample $width={24} /></ComboBox>
        <Divider />
        <ComboBox label="Escala" value="2500" width={48} />
        <Divider />
        <ToolButtons names={['undo', 'redo']} width={22} />
        <Divider />
        <ToolButtons names={['hand']} width={22} />
        <Divider />
        <ToolButtons names={['zoomWindow', 'zoomExtents', 'zoomIn', 'zoomOut', 'zoomLayer', 'zoomPan']} />
        <Divider />
        <ToolButtons names={['tableSearch']} width={22} />
        <Divider />
        <ToolButtons names={['fullscreen']} width={22} />
        <Divider />
        <ToolButtons names={['minimize', 'restore', 'close']} width={22} />
      </ToolBar>

      <Main>
        <SideBar>
          <ToolPalette names={drawTools} />
          <ToolPalette names={editTools} />
        </SideBar>
        <Canvas><Drawing /></Canvas>
        <SideBar $right>
          <ToolPalette names={snapTools} />
        </SideBar>
      </Main>

      <SheetBar>
        <SheetTab $active>C A D</SheetTab>
        <SheetTab>RASTER</SheetTab>
      </SheetBar>

      <StatusBar>
        <Coordinates>684980.49123 , 7955337.18505</Coordinates>
        {statusCells.map(([name, width]) => (
          <StatusCell key={name} $width={width}>{name}</StatusCell>
        ))}
      </StatusBar>

      <CommandPane>
        <CommandLog>
          <CommandLine>Comando: Pan</CommandLine>
          <CommandLine>Pan: Tecla direita do mouse finaliza comando...</CommandLine>
          <CommandInput aria-label="Comando" defaultValue="Pan: Tecla direita do mouse finaliza comando..." />
        </CommandLog>
        <ScrollTrack>
          <span />
          <ScrollThumb />
          <TriangleDown />
        </ScrollTrack>
      </CommandPane>
    </Window>
  </>
);

export default App;
